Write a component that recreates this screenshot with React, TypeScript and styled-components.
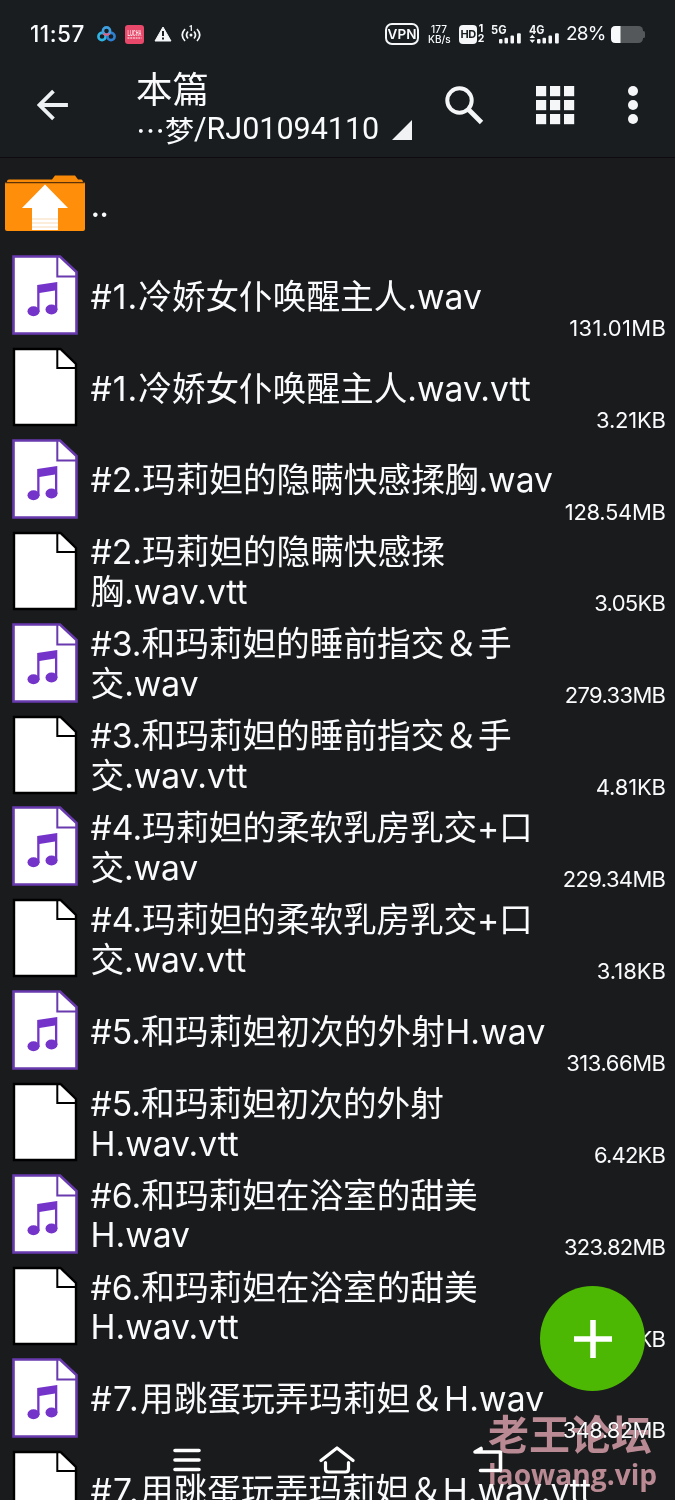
import React from "react";
import styled, { createGlobalStyle } from "styled-components";

const Global = createGlobalStyle`
  * { box-sizing: border-box; }
  html, body { margin: 0; padding: 0; background: #1a1b1d; }
  body { overflow: hidden; }
`;

const Screen = styled.div`
  position: relative;
  width: 675px;
  height: 1500px;
  overflow: hidden;
  background: #1a1b1d;
  color: #fafbfc;
  font-family: Inter, "Noto Sans CJK SC", sans-serif;
`;

const Top = styled.header`
  height: 158px;
  background: #191d20;
  border-bottom: 1px solid #0d0a10;
`;

const StatusBar = styled.div`
  display: flex;
  align-items: center;
  height: 68px;
  padding: 0 30px;
`;

const Clock = styled.span`
  width: 67px;
  font-size: 22.5px;
  font-weight: 500;
  line-height: 26px;
  letter-spacing: 0.5px;
  white-space: nowrap;
`;

const LuckyBadge = styled.div`
  display: flex;
  flex-direction: column;
  align-items: center;
  justify-content: center;
  width: 19px;
  height: 19px;
  margin: 0 10px 0 9px;
  border-radius: 3px;
  background: #e8496a;
`;

const StatusRight = styled.div`
  display: flex;
  align-items: center;
  margin-left: auto;
`;

const VpnTag = styled.span`
  display: flex;
  align-items: center;
  justify-content: center;
  width: 34px;
  height: 22px;
  border: 2px solid #f4f6f7;
  border-radius: 7px;
  font: 600 13.5px/16px Inter, sans-serif;
`;

const Speed = styled.div`
  width: 22px;
  margin: 0 9px 0 9px;
  text-align: center;
  font: 500 10px/10px Inter, sans-serif;
  white-space: nowrap;
`;

const HdTag = styled.span`
  width: 18px;
  height: 19px;
  border-radius: 4px;
  background: #f4f6f7;
  color: #191d20;
  text-align: center;
  font: 700 11px/19px Inter, sans-serif;
  letter-spacing: -0.6px;
`;

const SimNumbers = styled.div`
  width: 8px;
  margin-right: 6px;
  text-align: center;
  font: 700 10.5px/10.5px Inter, sans-serif;
`;

const Percent = styled.span`
  width: 39px;
  margin: 0 6px 0 6px;
  font-size: 19px;
  line-height: 24px;
  letter-spacing: -0.8px;
  white-space: nowrap;
`;

const SignalGroup = styled.div`
  display: flex;
  gap: 7px;
`;

const HotspotIcon = styled.svg`
  margin-left: 9px;
`;

const Toolbar = styled.div`
  display: flex;
  align-items: flex-start;
  height: 89px;
  padding: 0 36px 0 37px;
`;

const BackIcon = styled.svg`
  margin: 21px 67px 0 0;
`;

const Titles = styled.div`
  width: 309px;
  padding-top: 2px;
`;

const Title = styled.div`
  height: 39px;
  font-size: 36.5px;
  line-height: 40px;
`;

const Path = styled.div`
  display: flex;
  align-items: center;
  height: 40px;
  font: 30.5px/40px Roboto, "Noto Sans CJK SC", sans-serif;
  white-space: nowrap;
  svg { margin: 2px 0 0 13px; }
`;

const Cjk = styled.span`
  font-family: "Noto Sans CJK SC", sans-serif;
  font-size: 29px;
`;

const Actions = styled.div`
  display: flex;
  gap: 52px;
  padding: 18px 0 0 1px;
`;

const List = styled.ul`
  margin: 0;
  padding: 0;
  list-style: none;
`;

const Row = styled.li`
  display: flex;
  align-items: center;
  height: 91.9px;
  padding: 0 9px 0 5px;
`;

const IconCell = styled.div`
  display: flex;
  justify-content: center;
  flex: none;
  width: 85.5px;
  padding: 0 5.5px 1.5px 0;
`;

const Name = styled.div`
  flex: 1;
  min-width: 0;
  padding-top: 1.5px;
  font-size: 33.65px;
  line-height: 39.8px;
  white-space: pre;
`;

const Tracked = styled.span<{ $by: number }>`
  letter-spacing: ${(p) => p.$by}px;
`;

const Size = styled.span<{ $by: number }>`
  align-self: flex-end;
  flex: none;
  height: 27px;
  margin-right: ${(p) => -p.$by}px;
  font-size: 22px;
  line-height: 27px;
  letter-spacing: ${(p) => p.$by}px;
  white-space: nowrap;
`;

const Fab = styled.button`
  position: absolute;
  left: 540px;
  top: 1286px;
  display: grid;
  place-items: center;
  width: 105px;
  height: 105px;
  padding: 0;
  border: 0;
  border-radius: 50%;
  background: #4cb803;
`;

const NavBar = styled.nav`
  position: absolute;
  left: 0;
  right: 0;
  bottom: 20px;
  display: flex;
  justify-content: space-between;
  align-items: center;
  height: 40px;
  padding: 0 171px 0 172px;
`;

const Watermark = styled.div`
  position: absolute;
  left: 488px;
  top: 1407px;
  color: #b98a93;
  mix-blend-mode: lighten;
  font: 700 41px/50px "Noto Sans CJK SC", sans-serif;
  white-space: nowrap;
  small {
    display: block;
    margin-top: 2px;
    font: 700 28.2px/30px "Open Sans", sans-serif;
  }
`;

const Bars = ({ label, arrows }: { label: string; arrows?: boolean }) => (
  <svg width={31} height={22} viewBox="0 0 31 22" fill="#f4f6f7">
    <text x="0" y="10.500" fontFamily="Inter, sans-serif" fontWeight="700" fontSize="11.500" textLength="15.500" lengthAdjust="spacingAndGlyphs">{label}</text>
    {arrows && <path d="M.5 15l2.800-3.200 2.800 3.200zM.5 16.800l2.800 3.200L6.100 16.800z" />}
    <rect x="8" y="16" width="3.500" height="4.500" rx="1" />
    <rect x="13.500" y="14.800" width="3.500" height="5.700" rx="1" />
    <rect x="19.500" y="12.500" width="3.500" height="8" rx="1" />
    <rect x="26" y="10.300" width="3.800" height="10.200" rx="1" />
  </svg>
);

const AudioIcon = () => (
  <svg width={66} height={80} viewBox="0 0 66 80">
    <path d="M1.5 1.5H48L64.5 17V78.500H1.500Z" fill="#fff" stroke="#683aae" strokeWidth="2.600" />
    <path d="M45.300 2V21.500H64" fill="none" stroke="#683aae" strokeWidth="2" />
    <path d="M25.200 30L45.300 27V55H43V35.500L27.500 38V57H25.200Z" fill="#7433c9" />
    <ellipse cx="21.500" cy="56.300" rx="6" ry="5" fill="#7433c9" />
    <ellipse cx="39.500" cy="54.500" rx="6" ry="5" fill="#7433c9" />
  </svg>
);

const BlankIcon = () => (
  <svg width={66} height={80} viewBox="0 0 66 80">
    <path d="M2 2H48.500L64 17V78H2Z" fill="#fff" stroke="#000" strokeWidth="2.400" />
    <path d="M45.300 2V21H64" fill="none" stroke="#000" strokeWidth="2" />
  </svg>
);

const FolderIcon = () => (
  <svg width={80} height={57} viewBox="0 0 80 57">
    <path d="M2 8V6.500Q2 4.500 4 4.500H47L50 .5H70L73 4.500H76Q78 4.500 78 8Z" fill="#f98a08" />
    <rect y="7" width="80" height="49" rx="2" fill="#ff8f0a" />
    <path d="M1 7.600H79" stroke="#5c3208" strokeWidth="1.200" />
    <path d="M40 9.500L63 33H53V55H27V33H17Z" fill="#fff" />
    <path d="M27 44H53M27 48H53M27 52H53" stroke="#f9d9b5" strokeWidth="1" />
  </svg>
);

type Entry = {
  index: string;
  name: string;
  size: string;
  indexTracking?: number;
  tracking?: number;
  sizeTracking?: number;
  audio?: boolean;
};

const entries: Entry[] = [
  { index: "#1.", indexTracking: 1, name: "冷娇女仆唤醒主人.wav", size: "131.01MB", sizeTracking: 0.35, audio: true },
  { index: "#1.", indexTracking: 1, name: "冷娇女仆唤醒主人.wav.vtt", size: "3.21KB", sizeTracking: -0.2 },
  { index: "#2.", name: "玛莉妲的隐瞒快感揉胸.wav", size: "128.54MB", sizeTracking: -0.3, audio: true },
  { index: "#2.", name: "玛莉妲的隐瞒快感揉\n胸.wav.vtt", size: "3.05KB", sizeTracking: -0.7 },
  { index: "#3.", name: "和玛莉妲的睡前指交＆手\n交.wav", size: "279.33MB", sizeTracking: -0.65, audio: true },
  { index: "#3.", name: "和玛莉妲的睡前指交＆手\n交.wav.vtt", size: "4.81KB", sizeTracking: -0.15 },
  { index: "#4.", tracking: -0.15, name: "玛莉妲的柔软乳房乳交+口\n交.wav", size: "229.34MB", sizeTracking: -0.65, audio: true },
  { index: "#4.", tracking: -0.15, name: "玛莉妲的柔软乳房乳交+口\n交.wav.vtt", size: "3.18KB", sizeTracking: 0 },
  { index: "#5.", tracking: 0.15, name: "和玛莉妲初次的外射H.wav", size: "313.66MB", sizeTracking: -0.45, audio: true },
  { index: "#5.", name: "和玛莉妲初次的外射\nH.wav.vtt", size: "6.42KB", sizeTracking: -0.8 },
  { index: "#6.", name: "和玛莉妲在浴室的甜美\nH.wav", size: "323.82MB", sizeTracking: -0.75, audio: true },
  { index: "#6.", name: "和玛莉妲在浴室的甜美\nH.wav.vtt", size: "5.27KB", sizeTracking: -0.6 },
  { index: "#7.", indexTracking: 1.2, tracking: 0.15, name: "用跳蛋玩弄玛莉妲＆H.wav", size: "348.82MB", sizeTracking: -0.7, audio: true },
  { index: "#7.", indexTracking: 1.2, name: "用跳蛋玩弄玛莉妲＆H.wav.vtt", size: "" },
];

export default function App() {
  return (
    <Screen>
      <Global />
      <Top>
        <StatusBar>
          <Clock>11:57</Clock>
          <svg width={19} height={16} viewBox="0 0 19 16" fill="none" strokeWidth="2.600">
            <circle cx="5" cy="10.500" r="3.600" stroke="#30b4e4" />
            <circle cx="14" cy="10.500" r="3.600" stroke="#2d7fd0" />
            <circle cx="9.500" cy="5" r="3.600" stroke="#3f9fe0" />
            <path d="M6.500 7.500Q9.500 10 12.500 7.500" stroke="#e25d7e" strokeWidth="2" />
          </svg>
          <LuckyBadge>
            <svg width={19} height={19} viewBox="0 0 19 19" fill="#fbdde3">
              <text x="2.500" y="10.500" fontFamily="Liberation Sans, sans-serif" fontWeight="700" fontSize="8.500" textLength="14" lengthAdjust="spacingAndGlyphs">LUCHA</text>
              <path d="M2.500 13H16.500" stroke="#f7bcc8" strokeWidth="1.600" strokeDasharray="2 .7" />
            </svg>
          </LuckyBadge>
          <svg width={18} height={16} viewBox="0 0 18 16">
            <path d="M9 1L17 15H1Z" fill="#f4f6f7" stroke="#f4f6f7" strokeLinejoin="round" />
            <path d="M9 5V10M9 11.500V13.500" stroke="#191d20" strokeWidth="2" />
          </svg>
          <HotspotIcon width={20} height={18} viewBox="0 0 20 18" fill="none" stroke="#f4f6f7" strokeWidth="1.700">
            <path d="M4 4Q-1.500 10 4 16M7 6.500Q4 10 7 13.500M16 4Q21.500 10 16 16M13 6.500Q16 10 13 13.500" />
            <path d="M8.500 1.500L10.300 .8V6" strokeWidth="1.300" />
            <circle cx="10" cy="10" r="1.500" fill="#f4f6f7" stroke="none" />
          </HotspotIcon>
          <StatusRight>
            <VpnTag>VPN</VpnTag>
            <Speed>177<br />KB/s</Speed>
            <HdTag>HD</HdTag>
            <SimNumbers>1<br />2</SimNumbers>
            <SignalGroup>
              <Bars label="5G" />
              <Bars label="4G" arrows />
            </SignalGroup>
            <Percent>28%</Percent>
            <svg width={34} height={17} viewBox="0 0 34 17">
              <rect width="32" height="17" rx="4.500" fill="#55585a" />
              <rect x="31" y="5" width="3" height="7" rx="1.500" fill="#55585a" />
              <path d="M9.500 0H4.500Q0 0 0 4.500V12.500Q0 17 4.500 17H9.500Z" fill="#f8f9fa" />
            </svg>
          </StatusRight>
        </StatusBar>
        <Toolbar>
          <BackIcon width={32} height={32} viewBox="0 0 32 32" fill="none" stroke="#eef1f3" strokeWidth="3.800">
            <path d="M31 16H3M16.500 2L2.500 16L16.500 30" />
          </BackIcon>
          <Titles>
            <Title>本篇</Title>
            <Path>
              <Cjk>⋯梦</Cjk>/RJ01094110
              <svg width={20} height={20} viewBox="0 0 20 20"><path d="M20 0V20H0Z" fill="#f0f2f4" /></svg>
            </Path>
          </Titles>
          <Actions>
            <svg width={39} height={39} viewBox="0 0 39 39" fill="none" stroke="#f4f6f7">
              <circle cx="14.500" cy="14.500" r="12.200" strokeWidth="4" />
              <path d="M23.500 23.500L36.500 36.500" strokeWidth="4.800" />
            </svg>
            <svg width={39} height={39} viewBox="0 0 39 39" fill="#f4f6f7">
              {[0, 14, 28].map((y) => [0, 14, 28].map((x) => <rect key={x + "-" + y} x={x} y={y} width="10.200" height="10.200" />))}
            </svg>
            <svg width={12} height={40} viewBox="0 0 12 40" fill="#f4f6f7">
              <circle cx="6" cy="5" r="5" /><circle cx="6" cy="19" r="5" /><circle cx="6" cy="33" r="5" />
            </svg>
          </Actions>
        </Toolbar>
      </Top>
      <List>
        <Row>
          <IconCell><FolderIcon /></IconCell>
          <Name><Tracked $by={-1}>..</Tracked></Name>
        </Row>
        {entries.map((e) => (
          <Row key={e.index + e.name}>
            <IconCell>{e.audio ? <AudioIcon /> : <BlankIcon />}</IconCell>
            <Name>
              <Tracked $by={e.indexTracking ?? 0}>{e.index}</Tracked>
              <Tracked $by={e.tracking ?? 0}>{e.name}</Tracked>
            </Name>
            <Size $by={e.sizeTracking ?? 0}>{e.size}</Size>
          </Row>
        ))}
      </List>
      <Fab aria-label="Add">
        <svg width={38} height={38} viewBox="0 0 38 38" stroke="#fff" strokeWidth="5.500"><path d="M19 0V38M0 19H38" /></svg>
      </Fab>
      <NavBar>
        <svg width={30} height={24} viewBox="0 0 30 24" stroke="#fff" strokeWidth="3.600" strokeLinecap="round"><path d="M3 2.500H27M3 12H27M3 21.500H27" /></svg>
        <svg width={36} height={28} viewBox="0 0 36 28" fill="none" stroke="#fff" strokeWidth="3.200" strokeLinecap="round" strokeLinejoin="round"><path d="M2 14.500L18 2L34 14.500M6.500 16.500V23Q6.500 26 9.500 26H26.500Q29.500 26 29.500 23V16.500" /></svg>
        <svg width={32} height={28} viewBox="0 0 32 28" fill="none" stroke="#fff" strokeWidth="3.600" strokeLinecap="round" strokeLinejoin="round"><path d="M8.500 24.500H28.500V6H3L9 2.500V6" /></svg>
      </NavBar>
      <Watermark>老王论坛<small>laowang.vip</small></Watermark>
    </Screen>
  );
}
